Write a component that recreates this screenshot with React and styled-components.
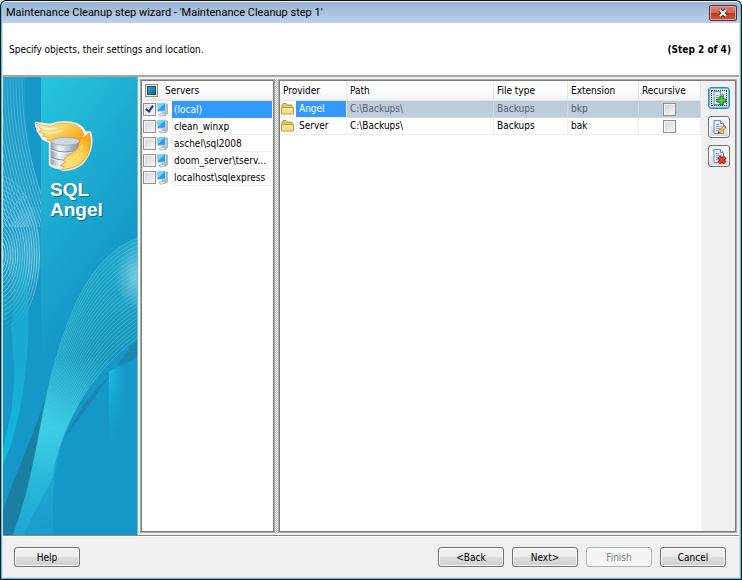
import React, { useState } from 'react';
import styled, { createGlobalStyle, css } from 'styled-components';

const GlobalStyle = createGlobalStyle`
  * {
    box-sizing: border-box;
  }

  body {
    margin: 0;
    color: #000;
    font: 10px/17px 'DejaVu Sans Condensed', 'DejaVu Sans', sans-serif;
  }

  button, input {
    margin: 0;
    font: inherit;
  }
`;

const Window = styled.div`
  display: flex;
  flex-direction: column;
  min-height: 100vh;
  border: 1px solid #111;
  border-radius: 6px 6px 0 0;
  background: #3cc8ea;
  padding: 0 1px 1px;
`;

const TitleBar = styled.header`
  display: flex;
  align-items: center;
  justify-content: space-between;
  height: 22px;
  padding: 0 3px 0 4px;
  border-top: 1px solid #eef4fa;
  border-radius: 5px 5px 0 0;
  background: linear-gradient(#9ab4d3, #b9d1ea);
`;

const Title = styled.h1`
  margin: 0;
  font: 11px/20px Roboto, 'Open Sans', sans-serif;
`;

const CloseButton = styled.button`
  display: flex;
  align-items: center;
  justify-content: center;
  width: 28px;
  height: 16px;
  padding: 0;
  border: 1px solid #5b2a35;
  border-radius: 2px;
  box-shadow: inset 0 0 0 1px #e5a79d;
  background: linear-gradient(#d9877a 0%, #cf6553 48%, #b63a25 50%, #c9573f 100%);
`;

const Frame = styled.div`
  display: flex;
  flex: 1;
  flex-direction: column;
  border: 1px solid #cfe2f4;
  border-top: 0;
  background: #f0f0f0;
`;

const Intro = styled.div`
  display: flex;
  align-items: center;
  justify-content: space-between;
  height: 54px;
  padding: 0 8px 0 6px;
  border-bottom: 2px solid #a6a6a6;
  background: #fff;
`;

const Description = styled.p`
  margin: 0;
`;

const Main = styled.main`
  display: flex;
  flex: 1;
  border-bottom: 1px solid #8a8a8a;
`;

const Sidebar = styled.aside`
  position: relative;
  flex: none;
  width: 135px;
  padding: 42px 0 0 30px;
  overflow: hidden;
  background: #1597c8;
`;

const Artwork = styled.svg`
  position: absolute;
  top: 0;
  left: 0;
  width: 135px;
  height: 458px;
`;

const Brand = styled.div`
  position: relative;
`;

const BrandName = styled.div`
  padding: 7px 0 0 17px;
  color: #fff;
  font: bold 19px/20px 'Liberation Sans', Arial, sans-serif;
  text-shadow: 1px 1px 1px #0b6f96;
`;

const Panels = styled.div`
  display: flex;
  flex: 1;
  min-width: 0;
  padding: 2px;
`;

const panel = css`
  border: 1px solid #a9a9a9;
  outline: 1px solid #7c7c7c;
  outline-offset: -2px;
  padding: 1px;
  background: #fff;
`;

const Servers = styled.section`
  ${panel}
  flex: none;
  width: 135px;
`;

const Splitter = styled.div`
  flex: none;
  width: 3px;
  background: repeating-conic-gradient(#c4c4c4 0 25%, #f4f4f4 0 50%) 0 0 / 2px 2px;
`;

const Objects = styled.section`
  ${panel}
  display: flex;
  flex: 1;
  align-items: stretch;
  min-width: 0;
`;

const header = css`
  height: 20px;
  background: linear-gradient(#fff 40%, #f1f2f4);
  border-bottom: 1px solid #e3e5e8;
`;

const ServersHead = styled.label`
  ${header}
  display: flex;
  align-items: center;
  gap: 7px;
  padding-left: 3px;
`;

const ServerList = styled.ul`
  margin: 0;
  padding: 0 1px;
  list-style: none;
`;

const ServerRow = styled.label`
  display: flex;
  align-items: center;
  height: 17px;
`;

const ServerName = styled.span`
  flex: 1;
  min-width: 0;
  height: 17px;
  margin-left: 3px;
  padding-left: 1px;
  border-left: 1px solid #eee;
  border-bottom: 1px solid #eee;
  line-height: 17px;
  white-space: nowrap;
  ${p => p.$selected && css`
    color: #fff;
    background: #3399ff;
    border-color: #3399ff;
  `}
`;

const Check = styled.input.attrs({ type: 'checkbox' })`
  display: block;
  position: relative;
  flex: none;
  width: 13px;
  height: 13px;
  appearance: none;
  border: 1px solid #8e8f8f;
  box-shadow: inset 0 0 0 1px #f4f4f4;
  background: linear-gradient(135deg, #cfd2d6, #f8f8f8);

  &:checked::after {
    content: '';
    position: absolute;
    top: 0;
    left: 3px;
    width: 3px;
    height: 6px;
    border: solid #31347c;
    border-width: 0 2px 2px 0;
    transform: rotate(35deg);
  }

  ${p => p.$mixed && css`
    border-color: #8e8f8f;
    background: linear-gradient(135deg, #35b5e0, #17577c);
    box-shadow: inset 0 0 0 1px #f4f4f4, inset 0 0 0 2px #1d4c6c;
  `}
`;

const Table = styled.table`
  flex: 1;
  width: 0;
  align-self: flex-start;
  border-collapse: separate;
  border-spacing: 0;
  table-layout: fixed;
`;

const Th = styled.th`
  ${header}
  padding: 0 0 0 3px;
  border-right: 1px solid #e3e5e8;
  font-weight: normal;
  text-align: left;
`;

const Td = styled.td`
  height: 17px;
  padding: 0 0 0 3px;
  border-right: 1px solid #eee;
  border-bottom: 1px solid #eee;
  line-height: 16px;
  ${p => p.$selected && css`
    color: #55606c;
    background: #bfcddb;
    border-color: #cfd9e3;
  `}
`;

const ProviderCell = styled(Td)`
  padding: 0;
  background: #fff;
`;

const Provider = styled.div`
  display: flex;
  align-items: center;
  height: 16px;
  padding-left: 1px;
`;

const ProviderName = styled.span`
  flex: 1;
  height: 16px;
  margin-left: 2px;
  padding-left: 2px;
  border-left: 1px solid #eee;
  ${p => p.$selected && css`
    color: #fff;
    background: #3399ff;
    border-color: #3399ff;
  `}
`;

const CheckCell = styled(Td)`
  padding: 0;

  ${Check} {
    margin: 0 auto;
  }
`;

const Tools = styled.div`
  display: flex;
  flex: none;
  flex-direction: column;
  gap: 7px;
  width: 34px;
  padding: 6px 0 0 7px;
  background: #f0f0f0;
`;

const ToolButton = styled.button`
  display: flex;
  align-items: center;
  justify-content: center;
  width: 22px;
  height: 22px;
  padding: 0;
  border: 1px solid #707070;
  border-radius: 3px;
  background: linear-gradient(#f4f4f4 50%, #e6e6e6 50%, #dadada);
  box-shadow: inset 0 0 0 1px #fafafa;
  ${p => p.$focused && css`
    border-color: #2c8fc0;
    box-shadow: inset 0 0 0 1px #4cc6ee;
    outline: 1px dotted #222;
    outline-offset: -4px;
  `}
`;

const Footer = styled.footer`
  display: flex;
  gap: 8px;
  padding: 10px 13px 10px 11px;
  border-top: 1px solid #fff;
`;

const Button = styled.button`
  width: 66px;
  height: 20px;
  padding: 0;
  border: 1px solid #707070;
  border-radius: 3px;
  color: #000;
  background: linear-gradient(#f3f3f3, #ebebeb 48%, #dddddd 50%, #cfcfcf);
  box-shadow: inset 0 0 0 1px #fbfbfb;

  &:first-child {
    margin-right: auto;
  }

  &:disabled {
    border-color: #adb2b5;
    color: #838383;
    background: #f4f4f4;
  }
`;

// each swoosh line is a blend of the upper and the lower edge
const upper = [134, 161, 84, 182, 64, 240, 47, 303, 36, 350, 30, 405, 10, 458];
const lower = [134, 261, 104, 284, 80, 312, 63, 353, 50, 384, 48, 420, 50, 458];

const blend = t => {
  const p = upper.map((v, i) => (v + (lower[i] - v) * t).toFixed(1));
  return `M${p[0]} ${p[1]}C${p.slice(2, 8).join(' ')} ${p.slice(8).join(' ')}`;
};

const swoosh = Array.from({ length: 26 }, (_, i) => blend(i / 25));
const rings = Array.from({ length: 17 }, (_, i) => 5 + i * 3);
const strands = Array.from({ length: 18 }, (_, i) => i * 3 - 32);

const SideArt = () => (
  <Artwork viewBox="0 0 135 458" aria-hidden="true">
    <defs>
      <linearGradient id="sky" x1="0" y1="0" x2="0.45" y2="1">
        <stop offset="0" stopColor="#27c5df" />
        <stop offset="0.45" stopColor="#1dabd0" />
        <stop offset="0.85" stopColor="#1597c8" />
      </linearGradient>
      <linearGradient id="band" gradientUnits="userSpaceOnUse" x1="0" y1="161" x2="0" y2="458">
        <stop offset="0" stopColor="#22a8cc" />
        <stop offset="0.4" stopColor="#1b93ba" />
        <stop offset="0.64" stopColor="#33c4dd" />
        <stop offset="0.8" stopColor="#24b2d5" />
        <stop offset="1" stopColor="#1aa1cf" />
      </linearGradient>
      <linearGradient id="thread" gradientUnits="userSpaceOnUse" x1="0" y1="161" x2="0" y2="458">
        <stop offset="0.6" stopColor="#4fdcee" stopOpacity="0.65" />
        <stop offset="0.8" stopColor="#4fdcee" stopOpacity="0.25" />
        <stop offset="1" stopColor="#4fdcee" stopOpacity="0.2" />
      </linearGradient>
      <linearGradient id="wisp" x1="0" y1="0" x2="0" y2="1">
        <stop offset="0" stopColor="#2db1d0" stopOpacity="0.3" />
        <stop offset="1" stopColor="#0cb9de" />
      </linearGradient>
      <radialGradient id="shard" cx="0" cy="0.1" r="0.8">
        <stop offset="0" stopColor="#16c3e0" />
        <stop offset="1" stopColor="#1597c8" stopOpacity="0" />
      </radialGradient>
      <radialGradient id="glow">
        <stop offset="0" stopColor="#9fdbe8" stopOpacity="0.7" />
        <stop offset="1" stopColor="#9fdbe8" stopOpacity="0" />
      </radialGradient>
      <linearGradient id="fade" x1="0" y1="0" x2="0" y2="1">
        <stop offset="0" stopColor="#fff" stopOpacity="0.2" />
        <stop offset="0.5" stopColor="#fff" stopOpacity="0.45" />
        <stop offset="0.7" stopColor="#fff" stopOpacity="0.8" />
        <stop offset="1" stopColor="#fff" stopOpacity="0" />
      </linearGradient>
      <mask id="fadeMask"><rect width="38" height="260" fill="url(#fade)" /></mask>
      <clipPath id="column"><rect width="38" height="458" /></clipPath>
    </defs>
    <rect x="38" width="97" height="290" fill="url(#sky)" />
    <g clipPath="url(#column)">
      <path d="M0 0H22C21 45 26 80 38 112V190L0 245Z" fill="#2aa6cb" opacity="0.5" />
      <g mask="url(#fadeMask)" fill="none" stroke="#c9edf4" strokeWidth="0.9">
        {strands.map(x => (
          <path key={x} d={`M${x} 0C${x} 50 ${x + 8} 90 ${x + 30} 150`} />
        ))}
        {rings.map(r => (
          <ellipse key={r} cx="-6" cy="178" rx={r * 0.8} ry={r * 1.5} />
        ))}
      </g>
      <path d="M18 150C30 215 30 320 0 388V372C14 320 12 290 8 250Z" fill="url(#wisp)" />
    </g>
    <path d="M134 261V280C100 298 80 325 60 364Z" fill="#1c86ad" />
    <path d="M47 303C36 350 14 390 0 434V458H10C24 420 36 370 47 303Z" fill="#1b7ea3" />
    <path
      d="M134 161C84 182 64 240 47 303C36 350 30 405 10 458H20L50 400C50 390 57 366 63 353C80 312 104 284 134 261Z"
      fill="url(#band)"
    />
    <g fill="none" stroke="url(#thread)" strokeWidth="0.7">
      {swoosh.map(d => <path key={d} d={d} />)}
    </g>
    <ellipse cx="134" cy="200" rx="22" ry="34" fill="url(#glow)" />
    <path d="M106 295C116 288 126 282 134 279V400H106Z" fill="url(#shard)" />
    <path d="M134.5 0V458" stroke="#5cc2de" />
  </Artwork>
);

const Logo = () => (
  <svg width="61" height="54" viewBox="101 125 183 162" role="img" aria-label="SQL Angel logo" display="block">
    <defs>
      <linearGradient id="steel" x1="0" x2="1" y1="0" y2="0">
        <stop offset="0" stopColor="#8d9bb0" />
        <stop offset="0.3" stopColor="#f5f8fc" />
        <stop offset="1" stopColor="#7b8aa3" />
      </linearGradient>
      <linearGradient id="gold" x1="0" x2="1" y1="0" y2="0.6">
        <stop offset="0" stopColor="#fff6c8" />
        <stop offset="0.5" stopColor="#ffd763" />
        <stop offset="1" stopColor="#f9a918" />
      </linearGradient>
      <linearGradient id="feather" x1="0.2" x2="0.8" y1="1" y2="0">
        <stop offset="0" stopColor="#ffe48a" />
        <stop offset="0.5" stopColor="#ffd04a" />
        <stop offset="1" stopColor="#f7a413" />
      </linearGradient>
    </defs>
    <path
      d="M110 138L150 144Q195 128 232 142Q250 150 256 166L272 166Q282 210 258 244Q242 274 190 277L182 271Q168 274 153 262V194L132 184L116 160Z"
      fill="#f1eee8" stroke="#f1eee8" strokeWidth="9" strokeLinejoin="round"
    />
    <path
      d="M110 138Q130 146 152 147Q190 130 226 142Q246 149 254 172L240 192H154L143 188L148 181L130 176L137 171L119 163L128 159Z"
      fill="url(#gold)" stroke="#ec9a1c" strokeWidth="2"
    />
    <path d="M128 150Q145 158 172 153M140 165Q164 168 190 160" fill="none" stroke="#fffbe5" strokeWidth="4" />
    <path d="M154 192V261Q176 273 199 271Q230 270 241 258V192Z" fill="url(#steel)" />
    <path d="M154 214Q198 234 241 214M154 239Q198 259 241 239" fill="none" stroke="#7f8da3" strokeWidth="3" />
    <path d="M154 218Q198 238 241 218M154 243Q198 263 241 243" fill="none" stroke="#fff" strokeWidth="2" />
    <ellipse cx="198" cy="192" rx="43" ry="12" fill="#cfd8e2" stroke="#8492a8" strokeWidth="2" />
    <path
      d="M242 184Q260 180 270 167Q281 207 260 242Q242 272 186 277L196 268L182 265L200 254L192 250Q202 236 220 226Q242 210 242 184Z"
      fill="url(#feather)" stroke="#e98d12" strokeWidth="2"
    />
    <path d="M202 265Q236 256 252 226M210 251Q240 236 250 202" fill="none" stroke="#fff1a5" strokeWidth="3" />
  </svg>
);

const CloseIcon = () => (
  <svg width="12" height="10" viewBox="0 0 12 10">
    <path d="M3 2L9 8M9 2L3 8" stroke="#5a3136" strokeWidth="4" />
    <path d="M3 2L9 8M9 2L3 8" stroke="#fff" strokeWidth="2" />
  </svg>
);

const ServerIcon = () => (
  <svg width="13" height="15" viewBox="0 0 13 15" aria-hidden="true">
    <path d="M9 1.5L11.5 2V12L9 13.5L6 12Z" fill="#b5bec8" stroke="#8f99a4" strokeWidth="0.6" />
    <path d="M2.5 12.5L8 11L10 12.5L5 14.5Z" fill="#dde1e5" stroke="#8b949e" strokeWidth="0.5" />
    <path d="M1 1.5L9.5 1V9L1.5 9.5Z" fill="#1e9ff0" stroke="#c3d2de" />
    <path d="M1.5 2L9 1.5L2 8Z" fill="#74d3fc" />
  </svg>
);

const FolderIcon = () => (
  <svg width="13" height="12" viewBox="0 0 13 12" aria-hidden="true">
    <path d="M1 10.5V1.5L2 .5H5L6 2H11V4" fill="#e8c465" stroke="#c3983a" />
    <path d="M.5 11V4.5H12.5V11Z" fill="#f6dc8c" stroke="#c79b3c" />
    <path d="M2 6H11" stroke="#fff4c9" />
  </svg>
);

const PageIcon = ({ children }) => (
  <svg width="16" height="16" viewBox="0 0 16 16" aria-hidden="true">
    <path d="M3 1.5H9.5L12.5 4.5V14.5H3Z" fill="#dce9fb" stroke="#6c8fd0" />
    <path d="M9.5 1.5V4.5H12.5" fill="#fff" stroke="#6c8fd0" />
    <path d="M5 5.5H8M5 7.5H10.5M5 9.5H10.5M5 11.5H9" stroke="#86a8e0" />
    {children}
  </svg>
);

const AddIcon = () => (
  <PageIcon>
    <path d="M9 6H12V9H15V12H12V15H9V12H6V9H9Z" fill="#4cc93f" stroke="#14801a" />
  </PageIcon>
);

const EditIcon = () => (
  <PageIcon>
    <path d="M7 14.5L8 11.5L12.5 7L14.5 9L10 13.5Z" fill="#f8c33c" stroke="#b27a1a" strokeWidth="0.8" />
    <path d="M12.5 7L13.5 6L15.5 8L14.5 9Z" fill="#e0564a" />
    <path d="M6.8 14.8L7.5 12.8L8.8 14.1Z" fill="#333" />
  </PageIcon>
);

const DeleteIcon = () => (
  <PageIcon>
    <path d="M8 9L14 15M14 9L8 15" stroke="#98190f" strokeWidth="4" />
    <path d="M8 9L14 15M14 9L8 15" stroke="#e8432f" strokeWidth="2" />
  </PageIcon>
);

const servers = ['(local)', 'clean_winxp', 'aschel\\sql2008', 'doom_server\\tserv...', 'localhost\\sqlexpress'];

const objects = [
  { provider: 'Angel', path: 'C:\\Backups\\', type: 'Backups', extension: 'bkp' },
  { provider: 'Server', path: 'C:\\Backups\\', type: 'Backups', extension: 'bak' },
];

const App = () => {
  const [checked, setChecked] = useState(['(local)']);

  const toggle = name => setChecked(
    checked.includes(name) ? checked.filter(n => n !== name) : [...checked, name]
  );

  return (
    <>
      <GlobalStyle />
      <Window>
        <TitleBar>
          <Title>Maintenance Cleanup step wizard - 'Maintenance Cleanup step 1'</Title>
          <CloseButton aria-label="Close"><CloseIcon /></CloseButton>
        </TitleBar>
        <Frame>
          <Intro>
            <Description>Specify objects, their settings and location.</Description>
            <strong>(Step 2 of 4)</strong>
          </Intro>
          <Main>
            <Sidebar>
              <SideArt />
              <Brand>
                <Logo />
                <BrandName>SQL<br />Angel</BrandName>
              </Brand>
            </Sidebar>
            <Panels>
              <Servers>
                <ServersHead>
                  <Check $mixed />
                  Servers
                </ServersHead>
                <ServerList>
                  {servers.map((name, i) => (
                    <li key={name}>
                      <ServerRow>
                        <Check checked={checked.includes(name)} onChange={() => toggle(name)} />
                        <ServerIcon />
                        <ServerName $selected={i === 0}>{name}</ServerName>
                      </ServerRow>
                    </li>
                  ))}
                </ServerList>
              </Servers>
              <Splitter />
              <Objects>
                <Table>
                  <colgroup>
                    <col width="67" />
                    <col />
                    <col width="74" />
                    <col width="71" />
                    <col width="62" />
                  </colgroup>
                  <thead>
                    <tr>
                      <Th>Provider</Th>
                      <Th>Path</Th>
                      <Th>File type</Th>
                      <Th>Extension</Th>
                      <Th>Recursive</Th>
                    </tr>
                  </thead>
                  <tbody>
                    {objects.map((row, i) => (
                      <tr key={row.provider}>
                        <ProviderCell>
                          <Provider>
                            <FolderIcon />
                            <ProviderName $selected={i === 0}>{row.provider}</ProviderName>
                          </Provider>
                        </ProviderCell>
                        <Td $selected={i === 0}>{row.path}</Td>
                        <Td $selected={i === 0}>{row.type}</Td>
                        <Td $selected={i === 0}>{row.extension}</Td>
                        <CheckCell $selected={i === 0}>
                          <Check aria-label={`Recursive ${row.provider}`} />
                        </CheckCell>
                      </tr>
                    ))}
                  </tbody>
                </Table>
                <Tools>
                  <ToolButton $focused aria-label="Add"><AddIcon /></ToolButton>
                  <ToolButton aria-label="Edit"><EditIcon /></ToolButton>
                  <ToolButton aria-label="Delete"><DeleteIcon /></ToolButton>
                </Tools>
              </Objects>
            </Panels>
          </Main>
          <Footer>
            <Button>Help</Button>
            <Button>&lt;Back</Button>
            <Button>Next&gt;</Button>
            <Button disabled>Finish</Button>
            <Button>Cancel</Button>
          </Footer>
        </Frame>
      </Window>
    </>
  );
};

export default App;
